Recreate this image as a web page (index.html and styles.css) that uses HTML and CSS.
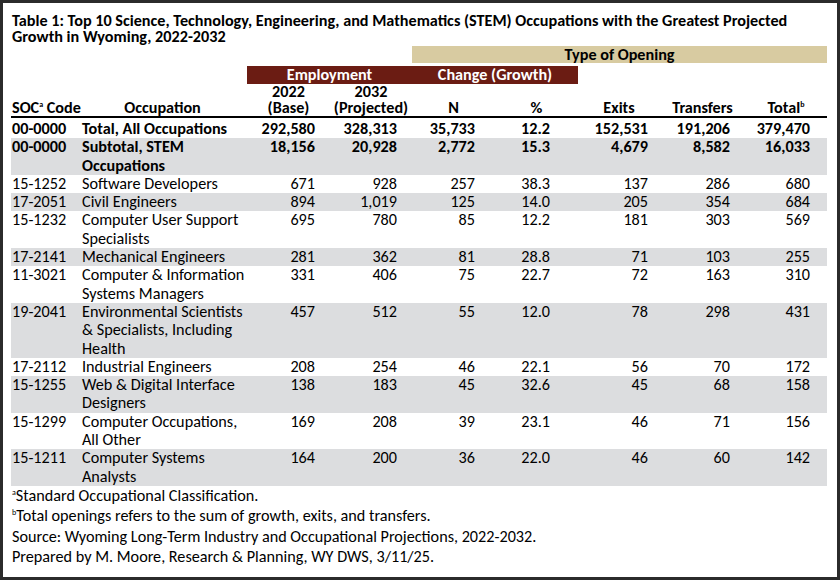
FILE: index.html
```html
<!DOCTYPE html>
<html lang="en">
<head>
<meta charset="utf-8">
<title>Table 1: Top 10 STEM Occupations in Wyoming</title>
<link rel="stylesheet" href="styles.css">
</head>
<body>
<div class="frame">
  <h1 class="title">Table 1: Top 10 Science, Technology, Engineering, and Mathematics (STEM) Occupations with the Greatest Projected<br>Growth in Wyoming, 2022-2032</h1>
  <table class="stem">
    <colgroup>
      <col class="c-soc"><col class="c-occ"><col class="c-base"><col class="c-proj"><col class="c-n"><col class="c-pct"><col class="c-exits"><col class="c-trans"><col class="c-total">
    </colgroup>
    <thead>
      <tr class="band-top">
        <th colspan="4" class="blank"></th>
        <th colspan="5" class="tan">Type of Opening</th>
      </tr>
      <tr class="band">
        <th colspan="2" class="blank"></th>
        <th colspan="2" class="maroon">Employment</th>
        <th colspan="2" class="maroon">Change (Growth)</th>
        <th colspan="3" class="blank"></th>
      </tr>
      <tr class="colhead">
        <th class="h-soc">SOC<sup>a</sup> Code</th>
        <th>Occupation</th>
        <th>2022<br>(Base)</th>
        <th>2032<br>(Projected)</th>
        <th>N</th>
        <th>%</th>
        <th>Exits</th>
        <th>Transfers</th>
        <th>Total<sup>b</sup></th>
      </tr>
    </thead>
    <tbody>
      <tr class="strong first"><td>00-0000</td><td>Total, All Occupations</td><td>292,580</td><td>328,313</td><td>35,733</td><td>12.2</td><td>152,531</td><td>191,206</td><td>379,470</td></tr>
      <tr class="strong shade"><td>00-0000</td><td>Subtotal, STEM Occupations</td><td>18,156</td><td>20,928</td><td>2,772</td><td>15.3</td><td>4,679</td><td>8,582</td><td>16,033</td></tr>
      <tr><td>15-1252</td><td>Software Developers</td><td>671</td><td>928</td><td>257</td><td>38.3</td><td>137</td><td>286</td><td>680</td></tr>
      <tr class="shade"><td>17-2051</td><td>Civil Engineers</td><td>894</td><td>1,019</td><td>125</td><td>14.0</td><td>205</td><td>354</td><td>684</td></tr>
      <tr><td>15-1232</td><td>Computer User Support Specialists</td><td>695</td><td>780</td><td>85</td><td>12.2</td><td>181</td><td>303</td><td>569</td></tr>
      <tr class="shade"><td>17-2141</td><td>Mechanical Engineers</td><td>281</td><td>362</td><td>81</td><td>28.8</td><td>71</td><td>103</td><td>255</td></tr>
      <tr><td>11-3021</td><td>Computer &amp; Information Systems Managers</td><td>331</td><td>406</td><td>75</td><td>22.7</td><td>72</td><td>163</td><td>310</td></tr>
      <tr class="shade"><td>19-2041</td><td>Environmental Scientists &amp; Specialists, Including Health</td><td>457</td><td>512</td><td>55</td><td>12.0</td><td>78</td><td>298</td><td>431</td></tr>
      <tr><td>17-2112</td><td>Industrial Engineers</td><td>208</td><td>254</td><td>46</td><td>22.1</td><td>56</td><td>70</td><td>172</td></tr>
      <tr class="shade"><td>15-1255</td><td>Web &amp; Digital Interface Designers</td><td>138</td><td>183</td><td>45</td><td>32.6</td><td>45</td><td>68</td><td>158</td></tr>
      <tr><td>15-1299</td><td>Computer Occupations, All Other</td><td>169</td><td>208</td><td>39</td><td>23.1</td><td>46</td><td>71</td><td>156</td></tr>
      <tr class="shade"><td>15-1211</td><td>Computer Systems Analysts</td><td>164</td><td>200</td><td>36</td><td>22.0</td><td>46</td><td>60</td><td>142</td></tr>
    </tbody>
  </table>
  <div class="notes">
    <p><sup>a</sup>Standard Occupational Classification.</p>
    <p><sup>b</sup>Total openings refers to the sum of growth, exits, and transfers.</p>
    <p>Source: Wyoming Long-Term Industry and Occupational Projections, 2022-2032.</p>
    <p>Prepared by M. Moore, Research &amp; Planning, WY DWS, 3/11/25.</p>
  </div>
</div>
</body>
</html>
```

FILE: styles.css
```css
html, body {
  margin: 0;
  padding: 0;
  background: #fff;
}

.frame {
  box-sizing: border-box;
  width: 840px;
  height: 580px;
  border: 3px solid #2b2b2b;
  padding: 10px 10px 0 8px;
  font-family: "Carlito", "Lato", "Liberation Sans", sans-serif;
  font-size: 16.2px;
  color: #000;
  background: #fff;
}

.title {
  margin: 0 0 1px 1px;
  font-size: 16.2px;
  line-height: 16px;
  font-weight: bold;
}

.stem {
  table-layout: fixed;
  border-collapse: collapse;
  width: 816px;
}

.c-soc { width: 67px; }
.c-occ { width: 169px; }
.c-base { width: 83px; }
.c-proj { width: 82px; }
.c-n { width: 83px; }
.c-pct { width: 83px; }
.c-exits { width: 82px; }
.c-trans { width: 85px; }
.c-total { width: 82px; }

.stem th,
.stem td {
  padding: 0;
  line-height: 18.3px;
}

.band-top th {
  height: 17px;
  line-height: 17px;
  border-bottom: 3px solid #fff;
}

.tan {
  background: #d8cba1;
  font-weight: bold;
  text-align: center;
}

.band th {
  height: 18px;
  line-height: 18px;
}

.maroon {
  background: #6b1c13;
  color: #fff;
  font-weight: bold;
  text-align: center;
}

.colhead th {
  font-weight: bold;
  text-align: center;
  vertical-align: bottom;
  line-height: 16px;
  border-bottom: 2px solid #000;
  white-space: nowrap;
}

.colhead .h-soc {
  text-align: left;
  padding-left: 1px;
}

sup {
  font-size: 8px;
  line-height: 0;
  vertical-align: 6px;
}

.stem td {
  vertical-align: top;
  text-align: right;
}

.stem td:nth-child(1) { text-align: left; padding-left: 1px; }
.stem td:nth-child(2) { text-align: left; padding-left: 4px; padding-right: 0; }
.stem td:nth-child(3) { padding-right: 15px; }
.stem td:nth-child(4) { padding-right: 15px; }
.stem td:nth-child(5) { padding-right: 20px; }
.stem td:nth-child(6) { padding-right: 28px; }
.stem td:nth-child(7) { padding-right: 12px; }
.stem td:nth-child(8) { padding-right: 15px; }
.stem td:nth-child(9) { padding-right: 17px; }

.stem tr.first td {
  padding-top: 2px;
}

.strong td {
  font-weight: bold;
}

.shade td {
  background: #dcdddf;
}

.notes {
  margin-left: 1px;
}

.notes p {
  margin: 0;
  line-height: 20.5px;
}
```
